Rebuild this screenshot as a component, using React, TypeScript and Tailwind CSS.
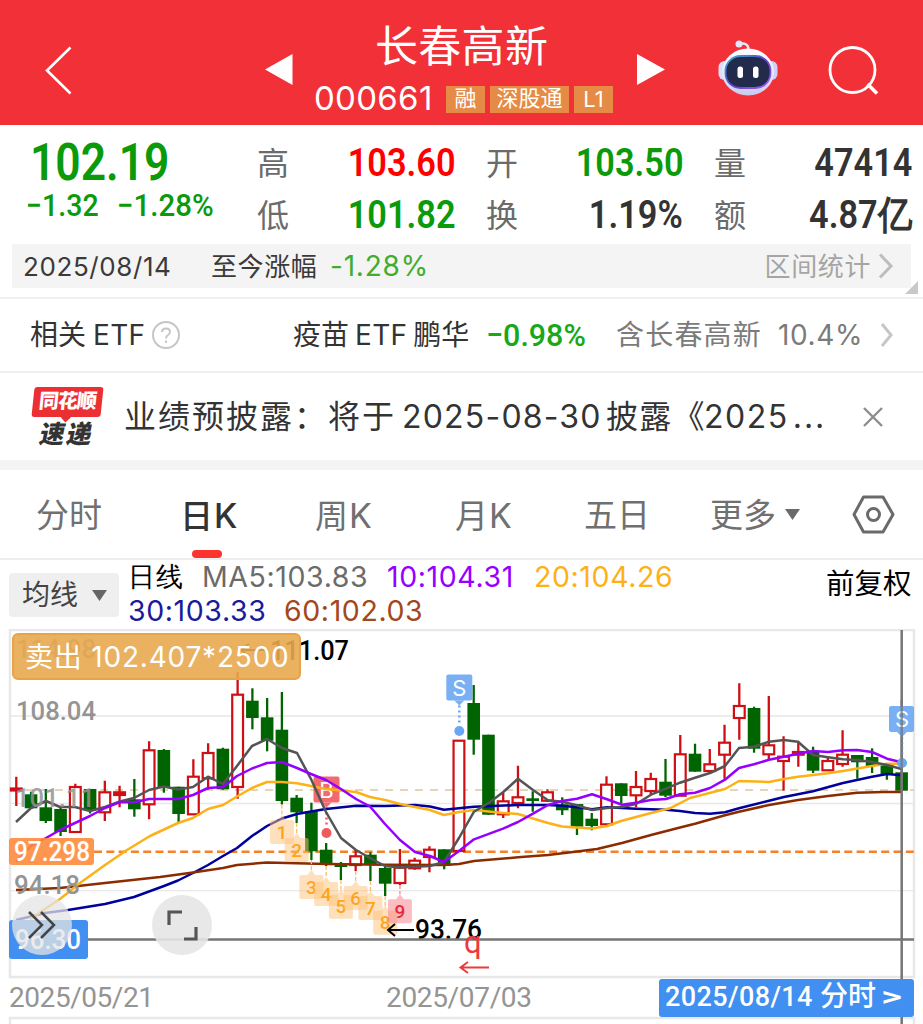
import React from 'react';

type Candle = [up: 0 | 1, high: number, top: number, bottom: number, low: number];

const X0 = 16.3;
const STEP = 14.755;
const cx = (i: number) => X0 + i * STEP;

// 1 = rising (hollow red), 0 = falling (solid green)
const candles: Candle[] = [
  [1, 776.7, 788.5, 790.5, 806], [0, 791.7, 794.3, 808.3, 808.3], [0, 789, 807.3, 821, 823],
  [0, 808, 809, 832, 836], [1, 783.7, 787, 832, 833], [0, 789, 789, 810.3, 813.5],
  [1, 780.7, 792.3, 812.3, 821], [1, 785.7, 792.3, 795, 807.3], [0, 779, 799.3, 809.3, 816.7],
  [1, 741.3, 750.3, 804.3, 819.3], [0, 749, 750, 787.3, 792.7], [0, 786.7, 786.7, 814, 822.5],
  [1, 759.3, 776.7, 814.3, 815], [1, 743.3, 753, 778.3, 789.7], [0, 747.7, 748.7, 789.3, 789.7],
  [1, 672, 694.7, 787, 798.7], [0, 688.3, 700.7, 718, 729.3], [0, 698, 717.3, 740.7, 751.3],
  [0, 692, 729.7, 801, 804.5], [0, 795, 797.7, 812.3, 823], [0, 802.7, 811, 851.3, 860],
  [0, 843, 849.7, 863.3, 866], [0, 862, 864.3, 867, 880], [1, 850, 856.3, 865, 871],
  [0, 852.3, 854.7, 864.3, 881], [0, 867, 868, 883.7, 896], [1, 849, 867.7, 883, 885],
  [1, 857.7, 860.7, 868.3, 869.7], [1, 846.3, 849.7, 857, 872.3], [0, 849.3, 849.3, 865.7, 869.3],
  [1, 740.7, 740.7, 851, 851], [0, 685, 703, 739.7, 754.7], [0, 734.7, 734.7, 814.7, 814.7],
  [1, 792.7, 801.3, 814.3, 818], [1, 765.7, 797.3, 803, 808.3], [0, 791.3, 798.3, 801, 811.7],
  [1, 789.3, 792.3, 800.7, 802], [0, 797.3, 804.3, 810.3, 815], [0, 804, 804, 826.7, 835],
  [0, 813, 818.7, 826, 830.3], [1, 776.3, 784.7, 824.3, 824.3], [0, 783.3, 783.3, 796, 803.3],
  [1, 771, 787, 795.3, 807.3], [1, 772.7, 779, 791, 794.3], [0, 759, 781.7, 795.7, 797.3],
  [1, 735, 754.3, 795.7, 795.7], [0, 743.7, 753.7, 771.7, 771.7], [1, 749, 764.3, 771, 773],
  [1, 724.7, 742.7, 754.7, 778.7], [1, 683.3, 706, 718, 739.7], [0, 706.7, 708, 748.7, 752.7],
  [1, 696, 745.3, 754.3, 759.3], [1, 736.3, 756.7, 761, 790.7], [1, 741.7, 752, 754.7, 766.7],
  [0, 746.7, 751.3, 770.7, 773], [1, 756.7, 761, 770.3, 770.3], [1, 730.3, 754.7, 764, 766.7],
  [0, 755, 755, 762.3, 778.7], [0, 748.3, 757, 766, 773], [0, 763.3, 763.3, 775, 779.7],
  [0, 772.3, 772.3, 790.7, 790.7],
];

const averages = [
  {
    color: '#00009c',
    points: '16,920 45,913 68,910 105,904 134,897 164,886 178,880.5 193,873 208,865 223,856 237,848 252,836 267,826 282,818.5 297,814 311,811.5 326,809 356,805.8 385,806 415,805 430,806.5 444,809.7 474,806.7 518,805 548,805 562,805.7 577,807.3 592,809.3 607,807.3 636,808.7 666,809.7 680,811 695,813 710,813.7 725,812.3 739,808.3 769,800.7 784,797 813,791.3 843,783 872,776.7 887,774 901.5,775.3',
  },
  {
    color: '#8b2c00',
    points: '16,890 60,888 105,883 160,877 193,872.5 223,868 237,865 267,862.5 326,864 385,864.7 444,865 459,864 474,861 518,857.3 548,855 573,852 597,849 622,843 651,835 680,827.5 695,823.7 725,815.3 739,811.7 769,805 798,800 828,796 857,792.7 883,792 901.5,792',
  },
  {
    color: '#fdb117',
    points: '30,919 45,909 60,899 80,883 105,865 127,850 150,836 178,823 193,818 208,809 223,805 237,796.5 252,788 267,782 282,782 297,783.3 311,786 326,789 341,790.5 356,792 370,797 385,800 400,804 430,810 444,815 459,812 474,810 503,813 518,814 548,823 562,826.5 592,828.5 607,826 621,821 651,813 670,808.3 690,798 725,789 739,781 769,782 784,779 798,776.7 828,773.3 843,771 872,766 887,763.7 901.5,763.7',
  },
  {
    color: '#545454',
    points: '16,822 31,808 46,801 60,807 75,807 90,811 105,807 120,801.5 134,798 149,790 164,786.5 178,789.5 193,787 208,776.7 223,784 237,766 252,746 267,739 282,748 297,753 311,779 326,812 341,838 356,850 370,858 385,866 400,867.5 430,866 444,862 459,838 474,811.7 489,802.7 503,792.3 518,778.7 533,790 548,800.3 562,801.7 577,805.3 592,810 607,808 622,807 636,804 651,794.7 666,788.7 680,782.7 695,777.7 710,773 725,766 739,748 754,746.7 769,741.7 784,740 798,741.7 813,755 828,757.3 843,759.3 857,760 872,762 887,765 901.5,769',
  },
  {
    color: '#9500ff',
    points: '16,862 31,846 46,838 60,830 75,823 90,816 105,808 120,802 134,802.3 149,799 178,799 193,795 208,788 223,787 237,776 252,768.5 267,763 282,762 297,768 311,774 326,780 341,789 356,799 370,806.5 385,824 400,840 415,852 430,856 444,862 459,851 474,839.3 503,828.7 518,822 533,813.7 548,805 562,801 577,798.7 592,794.3 607,799.3 622,804.7 636,802.7 651,800 666,799 680,794.3 695,792.7 710,788 725,779.7 739,768 754,764.3 769,759.7 784,756.7 798,753.7 813,751 828,752 843,750.3 857,750 872,752 887,758.7 901.5,762.3',
  },
];

// nine-turn counters: candle index and top of the label box
const counters: [n: number, index: number, y: number][] = [
  [1, 18, 820], [2, 19, 838], [3, 20, 875], [4, 21, 882], [5, 22, 894.7],
  [6, 23, 886], [7, 24, 896], [8, 25, 910.7], [9, 26, 899.3],
];

const Chevron: React.FC<{ className: string }> = ({ className }) => (
  <svg className={className} width="16" height="28" viewBox="0 0 16 28" fill="none" stroke="currentColor" strokeWidth="3">
    <path d="M2 2.5 L13 14 L2 25.5" />
  </svg>
);

const Robot = () => (
  <svg width="62" height="58" viewBox="0 0 62 58">
    <defs>
      <linearGradient id="shell" x1="0" y1="0" x2="0" y2="1">
        <stop offset="0" stopColor="#ffffff" />
        <stop offset="0.6" stopColor="#e3e4fb" />
        <stop offset="1" stopColor="#c9c9ee" />
      </linearGradient>
      <linearGradient id="rim" x1="0" y1="0" x2="1" y2="1">
        <stop offset="0" stopColor="#35b8c9" />
        <stop offset="0.5" stopColor="#5a3fd0" />
        <stop offset="1" stopColor="#a35bf0" />
      </linearGradient>
    </defs>
    <path d="M22 5 Q31 3 31.500 10" fill="none" stroke="#e6e4f5" strokeWidth="2.500" />
    <circle cx="22" cy="5" r="3.500" fill="#e4e6fa" />
    <rect x="1.500" y="22" width="12" height="19" rx="6" fill="#dcdcf7" />
    <rect x="48.500" y="22" width="12" height="19" rx="6" fill="#cfd0f3" />
    <ellipse cx="31" cy="33" rx="26" ry="23.500" fill="url(#shell)" />
    <rect x="8.500" y="17" width="45" height="32" rx="15" fill="#232b4d" stroke="url(#rim)" strokeWidth="1.800" />
    <rect x="20.500" y="27.500" width="5.500" height="11.500" rx="2.500" fill="#fff" />
    <rect x="36" y="27.500" width="5.500" height="11.500" rx="2.500" fill="#fff" />
  </svg>
);

const Header = () => (
  <header className="h-[125px] bg-[#f23037] text-white flex items-start">
    <svg className="ml-[44px] mt-[46px]" width="28" height="49" viewBox="0 0 28 49" fill="none" stroke="#fff" strokeWidth="2.600">
      <path d="M26.500 1.500 L3 24.500 L26.500 47.500" />
    </svg>
    <svg className="ml-[193px] mt-[54px]" width="28" height="31" viewBox="0 0 28 31" fill="#fff">
      <path d="M27.500 0 V31 L0 15.500 Z" />
    </svg>
    <div className="w-[344px] pl-[21px]">
      <h1 className="ml-[61px] mt-[15px] h-[62px] leading-[62px] text-[43px] tracking-[0.3px]">长春高新</h1>
      <div className="flex items-center h-[44px] text-[22px]">
        <span className="font-[Inter] text-[33px] tracking-[0.3px] w-[120px] mr-[12px]">000661</span>
        <span className="bg-[#e68b45] w-[39px] h-[27px] leading-[25px] text-center mr-[5px]">融</span>
        <span className="bg-[#e68b45] w-[79px] h-[27px] leading-[25px] text-center mr-[5px]">深股通</span>
        <span className="bg-[#e68b45] w-[39px] h-[27px] leading-[27px] text-center font-[Inter]">L1</span>
      </div>
    </div>
    <svg className="mt-[54px]" width="28" height="31" viewBox="0 0 28 31" fill="#fff">
      <path d="M0 0 V31 L28 15.500 Z" />
    </svg>
    <div className="ml-[52px] mt-[39px]"><Robot /></div>
    <svg className="ml-[49px] mt-[46px]" width="52" height="50" viewBox="0 0 52 50" fill="none" stroke="#fff" strokeWidth="2.800">
      <circle cx="24.500" cy="24" r="22.500" />
      <path d="M39.500 38 L49 47.500" strokeWidth="3.500" />
    </svg>
  </header>
);

const Num: React.FC<{ className: string; children: React.ReactNode }> = ({ className, children }) => (
  <span className={`inline-block font-[Roboto] whitespace-nowrap ${className}`}>{children}</span>
);

const QuoteCell: React.FC<{ label: string; value: string; color: string; width: string }> = ({ label, value, color, width }) => (
  <div className={`flex justify-between items-center h-[52px] ${width}`}>
    <span className="text-[32px] text-[#6b6b6b] pt-[2px]">{label}</span>
    <Num className={`text-[39px] font-semibold origin-right scale-x-[0.88] ${color}`}>{value}</Num>
  </div>
);

const Quote = () => (
  <section className="h-[119px] flex">
    <div className="w-[257px] pl-[30px] text-[#0a9a0a]">
      <Num className="mt-[10px] block text-[51px] leading-[56px] font-semibold origin-left scale-x-[0.87]">102.19</Num>
      <div className="flex -ml-[4px] text-[31px] leading-[30px] font-medium">
        <Num className="w-[91px] origin-left scale-x-[0.92]">−1.32</Num>
        <Num className="origin-left scale-x-[0.95]">−1.28%</Num>
      </div>
    </div>
    <div className="mt-[12px]">
      <QuoteCell label="高" value="103.60" color="text-[#ff0000]" width="w-[198px]" />
      <QuoteCell label="低" value="101.82" color="text-[#0a9a0a]" width="w-[198px]" />
    </div>
    <div className="mt-[12px] ml-[31px]">
      <QuoteCell label="开" value="103.50" color="text-[#0a9a0a]" width="w-[197px]" />
      <QuoteCell label="换" value="1.19%" color="text-[#333]" width="w-[197px]" />
    </div>
    <div className="mt-[12px] ml-[31px]">
      <QuoteCell label="量" value="47414" color="text-[#333]" width="w-[198px]" />
      <QuoteCell label="额" value="4.87亿" color="text-[#333]" width="w-[198px]" />
    </div>
  </section>
);

const RangeStrip = () => (
  <div className="relative h-[55px] border-b-2 border-[#efefef]">
    <div className="ml-[12px] mr-[12px] h-[44px] bg-[#f4f4f4] flex items-center text-[26px] text-[#3a3a3a]">
      <span className="ml-[11px] w-[188px] font-[Inter] tracking-[0.6px]">2025/08/14</span>
      <span className="w-[119px] tracking-[0.6px]">至今涨幅</span>
      <span className="font-[Inter] text-[28px] tracking-[0.8px] text-[#42ac2e]">-1.28%</span>
      <span className="ml-auto text-[#a5a5a5] tracking-[0.6px]">区间统计</span>
      <Chevron className="ml-[7px] mr-[17px] text-[#bdbdbd]" />
    </div>
    <svg className="absolute right-[5px] top-[37px]" width="13" height="13" viewBox="0 0 13 13" fill="#c8c8c8">
      <path d="M13 0 V13 H0 Z" />
    </svg>
  </div>
);

const EtfRow = () => (
  <div className="h-[74px] border-b-2 border-[#f0f0f0] flex items-center text-[28px] text-[#333] whitespace-nowrap">
    <span className="ml-[30px] w-[122px]">相关<span className="font-[Inter] ml-[7px] tracking-[0.3px]">ETF</span></span>
    <svg width="28" height="28" viewBox="0 0 28 28" fill="none" stroke="#c6c6c6" strokeWidth="2">
      <circle cx="14" cy="14" r="13" />
      <path d="M10 11 Q10 7.500 14 7.500 Q18 7.500 18 11 Q18 13 15.500 14.500 Q14 15.500 14 17.500 M14 19.500 V22" />
    </svg>
    <span className="ml-[113px] w-[193px]">疫苗<span className="font-[Inter] mx-[6px] tracking-[0.3px]">ETF</span>鹏华</span>
    <Num className="w-[130px] text-[32px] font-medium text-[#18a818] origin-left scale-x-[0.95]">−0.98%</Num>
    <span className="text-[#7b7b7b] tracking-[1.200px]">含长春高新</span>
    <span className="ml-[16px] text-[#7b7b7b] font-[Inter] w-[102px] tracking-[0.6px]">10.4%</span>
    <svg width="14" height="26" viewBox="0 0 14 26" fill="none" stroke="#c6c6c6" strokeWidth="3">
      <path d="M2 2 L11 13 L2 24" />
    </svg>
  </div>
);

const NewsRow = () => (
  <div className="h-[87px] flex items-center text-[#333]">
    <div className="ml-[31px] w-[72px] h-[60px] flex flex-col items-center">
      <div className="relative w-[69px] h-[30px] shrink-0 -skew-x-6 rounded-[3px] bg-[#ec2f33] text-white text-[20px] leading-[29px] font-black text-center tracking-[-1px]">
        同花顺
        <span className="absolute left-[31px] top-[27px] w-[7px] h-[7px] rotate-45 bg-[#ec2f33]" />
      </div>
      <div className="-skew-x-12 mt-px text-[25px] leading-[33px] font-black tracking-[2px]">速递</div>
    </div>
    <p className="ml-[21px] w-[738px] text-[32px] whitespace-nowrap flex items-center">
      <span className="w-[278px] tracking-[2px]">业绩预披露：将于</span>
      <span className="font-[Inter] w-[204px] tracking-[1.200px]">2025-08-30</span>
      <span className="w-[98px] tracking-[1.200px]">披露《</span>
      <span className="font-[Inter] tracking-[1.500px]">2025</span>
      <span className="font-[Inter] ml-[4px] tracking-[2px]">...</span>
    </p>
    <svg width="22" height="22" viewBox="0 0 22 22" stroke="#8d8d8d" strokeWidth="2.400">
      <path d="M2 2 L20 20 M20 2 L2 20" />
    </svg>
  </div>
);

const Tabs = () => (
  <nav className="h-[90px] border-b-2 border-[#eeeeee] flex items-center text-[33px] text-[#707070] whitespace-nowrap">
    <span className="ml-[36px] w-[144px] pt-[3px]">分时</span>
    <span className="relative w-[135px] pt-[3px] font-medium text-[#333]">
      日<span className="font-[Inter] ml-px text-[34px]">K</span>
      <span className="absolute left-[12px] top-[63px] w-[30px] h-[8px] rounded-full bg-[#fb3430]" />
    </span>
    <span className="w-[140px] pt-[3px]">周<span className="font-[Inter] ml-px text-[34px]">K</span></span>
    <span className="w-[129px] pt-[3px]">月<span className="font-[Inter] ml-px text-[34px]">K</span></span>
    <span className="w-[126px] pt-[3px]">五日</span>
    <span className="pt-[3px]">更多</span>
    <svg className="ml-[9px]" width="15" height="11" viewBox="0 0 15 11" fill="#6a6a6a"><path d="M0 0 H15 L7.500 11 Z" /></svg>
    <svg className="ml-[52px]" width="43" height="39" viewBox="0 0 43 39" fill="none" stroke="#6a6a6a" strokeWidth="3">
      <path d="M11.500 2 H31 L41 19.500 L31 37 H11.500 L2 19.500 Z" strokeLinejoin="round" />
      <circle cx="21.500" cy="19.500" r="6" />
    </svg>
  </nav>
);

const Legend = () => (
  <div className="h-[69px] flex">
    <div className="ml-[9px] mt-[13px] w-[110px] h-[44px] rounded bg-[#efefef] flex items-center text-[28px] text-[#444]">
      <span className="ml-[13px] w-[70px]">均线</span>
      <svg width="15" height="11" viewBox="0 0 15 11" fill="#666"><path d="M0 0 H15 L7.500 11 Z" /></svg>
    </div>
    <div className="ml-[9px] w-[697px] font-[Inter] text-[28.500px] tracking-[0.6px] whitespace-nowrap">
      <div className="flex items-center h-[34px]">
        <span className="w-[74px] text-[27px] text-black">日线</span>
        <span className="w-[185px] text-[#6b6b6b]">MA5:103.83</span>
        <span className="w-[147px] text-[#9500ff]">10:104.31</span>
        <span className="text-[#fdb117]">20:104.26</span>
      </div>
      <div className="flex items-center h-[34px]">
        <span className="w-[156px] text-[#1a1a9c]">30:103.33</span>
        <span className="text-[#a3471c]">60:102.03</span>
      </div>
    </div>
    <span className="mt-[3px] ml-px text-[28.500px] text-black whitespace-nowrap">前复权</span>
  </div>
);

const TradeMark: React.FC<{ x: number; y: number; dotY: number; letter: string; color: string; w?: number }> = ({ x, y, dotY, letter, color, w = 26 }) => (
  <g>
    <rect x={x - 13} y={y} width={w} height="26" rx="2" fill={color} opacity="0.9" />
    <path d={`M${x - 5} ${y + 26} h10 l-5 5 z`} fill={color} opacity="0.9" />
    <line x1={x} x2={x} y1={y + 31} y2={dotY - 6} stroke={color} strokeWidth="2.500" strokeDasharray="2 3" />
    <circle cx={x} cy={dotY} r="5" fill={color} />
    <text x={x} y={y + 21} textAnchor="middle" fontFamily="Inter" fontSize="22" fill="#fff">{letter}</text>
  </g>
);

const Chart = () => (
  <svg className="block" width="923" height="395" viewBox="0 629 923 395" fontFamily="Roboto">
    <g stroke="#e8e8e8" fill="none">
      <rect x="10" y="630" width="904" height="347" strokeWidth="2.500" />
      <path d="M10 716 H914 M10 803.500 H914 M10 890.700 H914" strokeWidth="1.300" />
      <path d="M10 1024 V1018 H914 V1024" strokeWidth="2.500" />
    </g>
    <line x1="10" x2="914" y1="790" y2="790" stroke="#dfc6a0" strokeWidth="1.500" strokeDasharray="8 7" />
    <line x1="94" x2="914" y1="851.700" y2="851.700" stroke="#f5822a" strokeWidth="2.500" strokeDasharray="8 4.300" />

    <TradeMark x={326.500} y={776.500} dotY={833} letter="B" color="#ef5a5f" />

    {candles.map(([up, high, top, bottom, low], i) => (
      <g key={i} stroke={up ? '#cf0f14' : '#006400'} fill={up ? '#cf0f14' : '#006400'}>
        {up ? (
          <>
            <path d={`M${cx(i)} ${high} V${top} M${cx(i)} ${bottom} V${low}`} strokeWidth="2.300" />
            <rect x={cx(i) - 5.400} y={top} width="10.800" height={bottom - top} fill={bottom - top > 3 ? '#fff' : '#cf0f14'} strokeWidth="2.200" />
          </>
        ) : (
          <>
            <path d={`M${cx(i)} ${high} V${low}`} strokeWidth="2.300" />
            <rect x={cx(i) - 6.300} y={top} width="12.600" height={bottom - top} stroke="none" />
          </>
        )}
      </g>
    ))}

    {averages.map((line) => (
      <polyline key={line.color} points={line.points} fill="none" stroke={line.color} strokeWidth="2.500" strokeLinejoin="round" />
    ))}

    {counters.map(([n, i, y]) => (
      <g key={n}>
        <line x1={cx(i)} x2={cx(i)} y1={candles[i][4]} y2={y - 5} stroke={n === 9 ? '#ef8b92' : '#fcbf6b'} strokeWidth="1.300" strokeDasharray="4 2" />
        <path
          d={`M${cx(i) - 10} ${y} h6 l4 -5 l4 5 h6 q2 0 2 2 v20 q0 2 -2 2 h-20 q-2 0 -2 -2 v-20 q0 -2 2 -2 z`}
          fill={n === 9 ? '#f47c86' : '#fdc37a'}
          opacity="0.5"
        />
        <text x={cx(i)} y={y + 18.500} textAnchor="middle" fontSize="19" fontWeight="500" fill={n === 9 ? '#e8283c' : '#ffa31f'}>{n}</text>
      </g>
    ))}

    <g fontSize="26" fontWeight="500" fill="#949494">
      <text x="16" y="657.500" textLength="80" lengthAdjust="spacingAndGlyphs">114.98</text>
      <text x="16" y="720" textLength="80" lengthAdjust="spacingAndGlyphs">108.04</text>
      <text x="15" y="807" textLength="80" lengthAdjust="spacingAndGlyphs" opacity="0.85">101.11</text>
      <text x="14" y="894" textLength="66" lengthAdjust="spacingAndGlyphs">94.18</text>
    </g>
    <g fontSize="27" fontWeight="500" fill="#000">
      <text x="270" y="660" textLength="79" lengthAdjust="spacingAndGlyphs">111.07</text>
      <text x="415" y="939" textLength="67" lengthAdjust="spacingAndGlyphs">93.76</text>
      <path d="M268 650 H241 M249 644 L241 650 L249 656 M414 930 H388 M395 924 L388 930 L395 936" fill="none" stroke="#000" strokeWidth="2" />
    </g>
    <path d="M10 939.500 H914 M901.700 630 V1024" stroke="#757575" strokeWidth="2.500" />
    <text x="464" y="953" fontSize="31" fill="#ee3a3a">q</text>
    <path d="M489 967.500 H461 M468 962 L460.500 967.500 L468 973" fill="none" stroke="#ee3a3a" strokeWidth="2" />

    <TradeMark x={459.300} y={674.500} dotY={731} letter="S" color="#6aa7f2" />
    <TradeMark x={902} y={706} dotY={763} letter="S" color="#6aa7f2" w={25} />
    <path d="M901.700 700 V790" stroke="#757575" strokeWidth="2.500" opacity="0.7" />

    <rect x="9" y="838" width="85" height="27" rx="3" fill="#ff8b3d" opacity="0.9" />
    <text x="14" y="861" fontSize="27" fontWeight="500" fill="#fff" textLength="76" lengthAdjust="spacingAndGlyphs">97.298</text>
    <rect x="9" y="920" width="79" height="39" rx="3" fill="#418ff0" />
    <text x="15" y="949" fontSize="28" fontWeight="500" fill="#fff" textLength="66" lengthAdjust="spacingAndGlyphs">96.30</text>

    <g fontSize="28" fill="#949494">
      <text x="9" y="1006.500" textLength="145" lengthAdjust="spacing">2025/05/21</text>
      <text x="386" y="1006.500" textLength="146" lengthAdjust="spacing">2025/07/03</text>
    </g>
  </svg>
);

const App: React.FC = () => (
  <div className="w-[923px] h-[1024px] overflow-hidden bg-white font-['Inter','Noto_Sans_CJK_SC',sans-serif]">
    <Header />
    <Quote />
    <RangeStrip />
    <EtfRow />
    <NewsRow />
    <div className="h-[10px] bg-[#f4f4f4]" />
    <Tabs />
    <Legend />
    <div className="relative">
      <Chart />
      <div className="absolute left-[12px] top-[4px] w-[289px] h-[47px] rounded-md border-2 border-[#e5a448] bg-[#e8a950]/90 text-white text-[28px] leading-[45px] pl-[11px] whitespace-nowrap tracking-[0.8px]">
        卖出 102.407*2500
      </div>
      <div className="absolute left-[12px] top-[266px] w-[60px] h-[60px] rounded-full bg-[#e4e4e4]/75 flex items-center justify-center">
        <svg width="28" height="28" viewBox="0 0 28 28" fill="none" stroke="#444" strokeWidth="2.500">
          <path d="M1 1 L14 14 L1 27 M13 1 L26 14 L13 27" />
        </svg>
      </div>
      <div className="absolute left-[152px] top-[266px] w-[60px] h-[60px] rounded-full bg-[#e6e6e6]/90 flex items-center justify-center">
        <svg width="31" height="31" viewBox="0 0 31 31" fill="none" stroke="#555" strokeWidth="3.200">
          <path d="M2 15 V2 H15 M29 17 V29 H17" />
        </svg>
      </div>
      <div className="absolute left-[659px] top-[350px] w-[255px] h-[38px] rounded-[3px] bg-[#418ff0] text-white text-[27px] leading-[36px] pl-[6px] font-[Roboto,'Noto_Sans_CJK_SC',sans-serif] font-medium whitespace-nowrap flex">
        <span className="w-[155px] tracking-[0.4px]">2025/08/14</span>
        <span className="w-[61px] text-[28px]">分时</span>
        <span className="inline-block origin-left scale-x-[1.5]">&gt;</span>
      </div>
    </div>
  </div>
);

export default App;
